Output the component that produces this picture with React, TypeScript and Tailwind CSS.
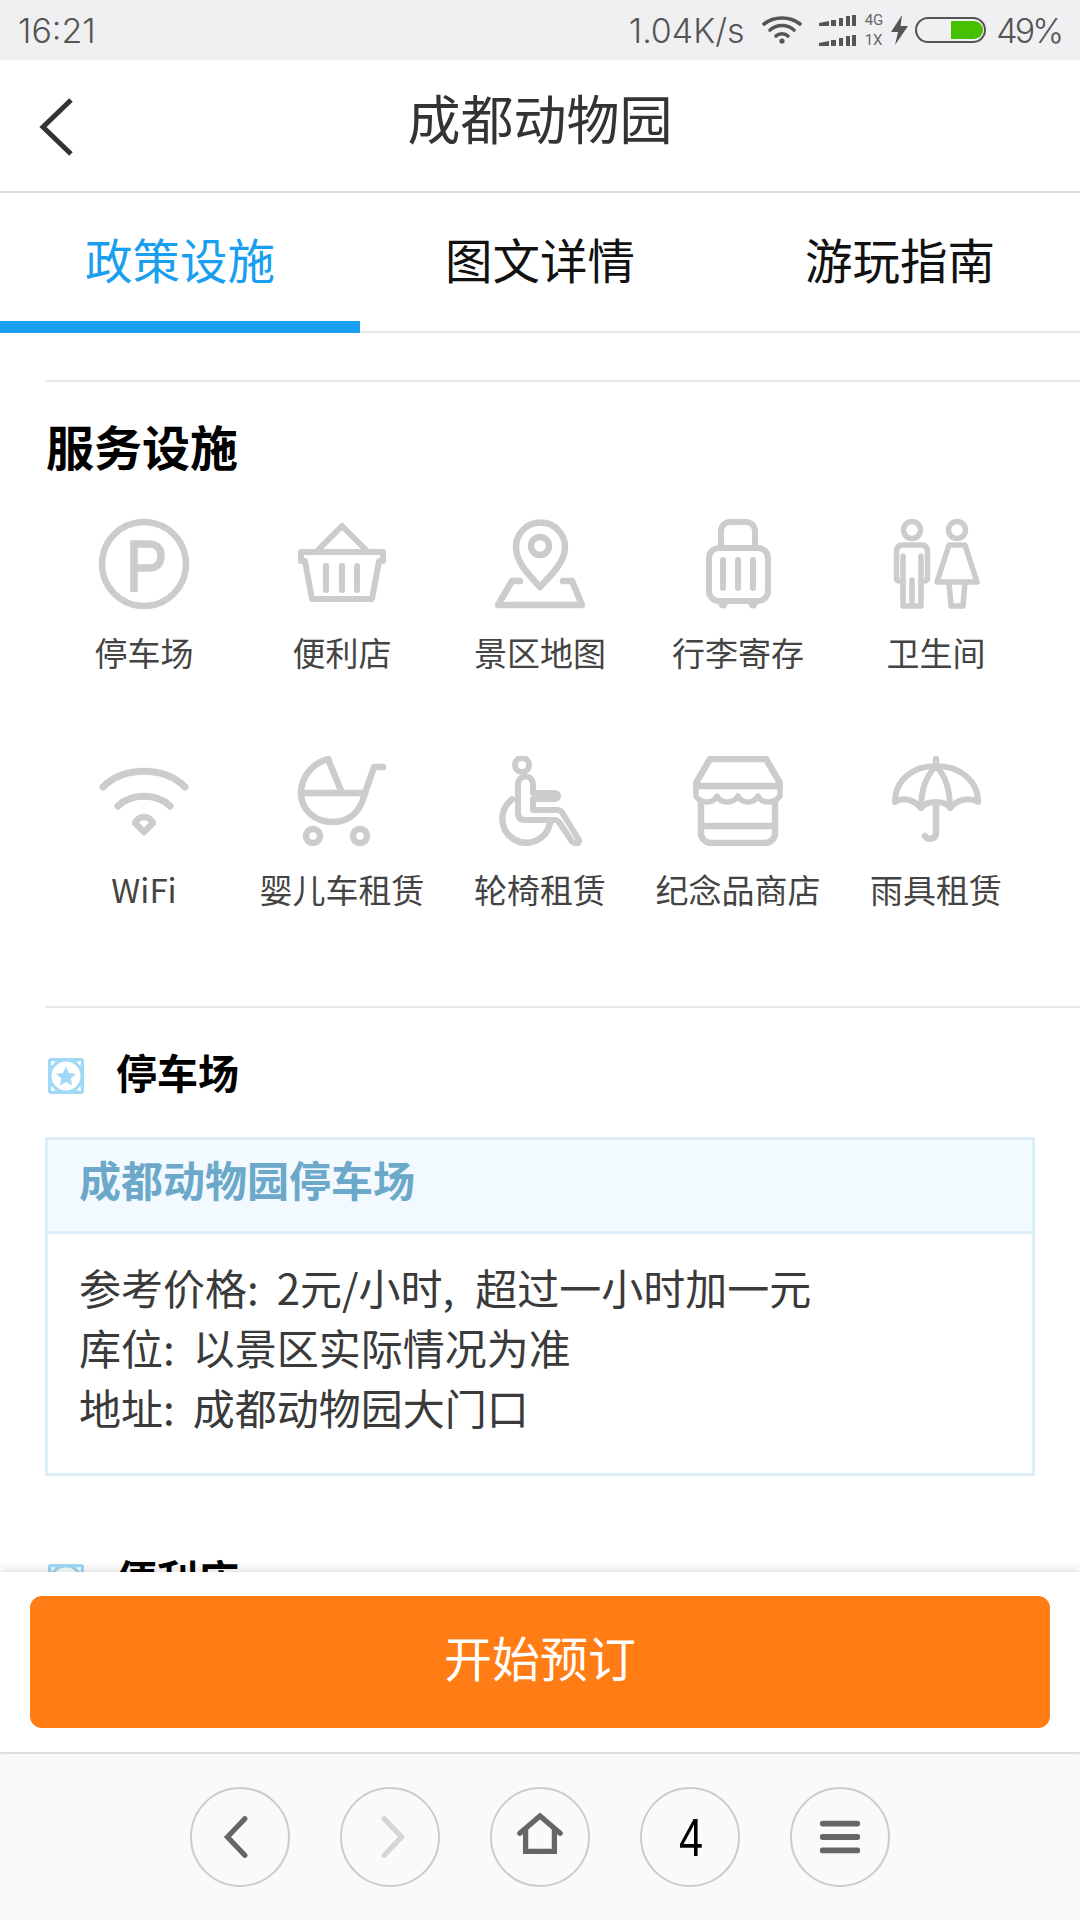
import type { ReactNode } from 'react';

const cjk = "font-['Noto_Sans_CJK_SC','Noto_Sans',sans-serif]";

function Glyph({ children }: { children: ReactNode }) {
  return (
    <svg
      width="90"
      height="90"
      viewBox="0 0 90 90"
      fill="none"
      stroke="#cccccc"
      strokeWidth="5.5"
      strokeLinecap="round"
      strokeLinejoin="round"
    >
      {children}
    </svg>
  );
}

const facilities: { label: string; icon: ReactNode }[] = [
  {
    label: '停车场',
    icon: (
      <>
        <circle cx="45" cy="45" r="42" strokeWidth="6.5" />
        <path d="M35 73V25H50C58 25 62 30 62 37C62 44 58 49 50 49H35" strokeWidth="7.5" strokeLinecap="butt" strokeLinejoin="miter" />
      </>
    ),
  },
  {
    label: '便利店',
    icon: (
      <>
        <path d="M21 31L45 7L69 31" strokeWidth="6" />
        <path d="M4 33H86V42H82L75 80H15L8 42H4Z" strokeWidth="6" />
        <path d="M29 47V71M45 47V71M60 47V71" strokeWidth="6" />
      </>
    ),
  },
  {
    label: '景区地图',
    icon: (
      <>
        <path d="M45 68C33 55 21 43 21 28A24.5 24.5 0 0 1 70 28C70 43 57 55 45 68Z" strokeWidth="6.5" />
        <circle cx="45" cy="27" r="9" strokeWidth="6.5" />
        <path d="M25 62H17L3 86H87L77 62H68" strokeWidth="6.5" />
      </>
    ),
  },
  {
    label: '行李寄存',
    icon: (
      <>
        <rect x="16" y="29" width="59" height="53" rx="10" strokeWidth="6" />
        <path d="M28 29V12a9 9 0 0 1 9-9h16a9 9 0 0 1 9 9v17" strokeWidth="6" />
        <path d="M30 41V69M45 41V69M60 41V69" strokeWidth="6" />
        <circle cx="30" cy="85" r="4.5" fill="#cccccc" stroke="none" />
        <circle cx="60" cy="85" r="4.5" fill="#cccccc" stroke="none" />
      </>
    ),
  },
  {
    label: '卫生间',
    icon: (
      <>
        <circle cx="21" cy="11" r="8.5" strokeWidth="5.5" />
        <circle cx="66" cy="11" r="8.5" strokeWidth="5.5" />
        <path d="M12 37V87H30V37M21 61V87" strokeWidth="5.5" />
        <path d="M12 62H9Q5.5 62 5.5 59V33Q5.5 26 12 26H30Q36.5 26 36.5 33V59Q36.5 62 33 62H30" strokeWidth="5.5" />
        <path d="M58 26H74L86 63H46Z" strokeWidth="5.5" />
        <path d="M58 63L60 87H72L74 63" strokeWidth="5.5" />
      </>
    ),
  },
  {
    label: 'WiFi',
    icon: (
      <>
        <path d="M4 31C25 10 65 10 86 31" strokeWidth="7" />
        <path d="M19 50C32 37 58 37 71 50" strokeWidth="7" />
        <path d="M45 61Q51 61 54 67L45 76L36 67Q39 61 45 61Z" strokeWidth="6.5" />
      </>
    ),
  },
  {
    label: '婴儿车租赁',
    icon: (
      <>
        <path d="M31 3C14 8 4 22 4 37C4 54 18 66 36 66C52 66 63 56 67 40L77 11H86" strokeWidth="6.5" />
        <path d="M31 3L45 37M4 37H68" strokeWidth="6.5" />
        <circle cx="16" cy="80" r="7" strokeWidth="6.5" />
        <circle cx="63" cy="80" r="7" strokeWidth="6.5" />
      </>
    ),
  },
  {
    label: '轮椅租赁',
    icon: (
      <>
        <circle cx="27" cy="9" r="7" strokeWidth="6" />
        <path d="M23 28a7.5 7.5 0 0 1 15 0V37H60a3 3 0 0 1 0 6H38V54H62Q66 54 68 58L84 84Q85 88 80 87Q78 87 76 84L64 66Q62 64 60 64H30Q23 64 23 56Z" strokeWidth="6" />
        <path d="M17 43.5A24 24 0 1 0 55 67" strokeWidth="6.5" />
      </>
    ),
  },
  {
    label: '纪念品商店',
    icon: (
      <>
        <path d="M17 3H73L87 27V30H3V27Z" strokeWidth="6.5" />
        <path d="M3 30V40C8 48 20 48 24 40C28 48 40 48 45 40C49 48 61 48 65 40C69 48 81 48 87 40V30" strokeWidth="5.5" />
        <path d="M8 46V77a10 10 0 0 0 10 10H72a10 10 0 0 0 10-10V46M8 70H82" strokeWidth="6.5" />
      </>
    ),
  },
  {
    label: '雨具租赁',
    icon: (
      <>
        <path d="M4 46C4 24 22 10 45 10C68 10 87 24 87 46C78 41 67 43 59 52C54 44 36 44 30 52C22 43 12 41 4 46Z" strokeWidth="6" />
        <path d="M45 10C35 20 30 35 30 52M45 10C55 20 59 35 59 52" strokeWidth="6" />
        <path d="M45 3V10M45 48V77a6 6 0 0 1-11 3" strokeWidth="6.5" />
      </>
    ),
  },
];

function StatusBar() {
  return (
    <div className="flex h-[60px] shrink-0 items-center bg-[#f0f0f2] pl-[18px] pr-[19px] font-['Inter',sans-serif] text-[34px] font-light text-[#555555]">
      <span>16:21</span>
      <span className="ml-auto">1.04K/s</span>
      <svg className="ml-[17px]" width="40" height="28" viewBox="0 0 40 28" fill="none" stroke="#555555" strokeWidth="3.6" strokeLinecap="round">
        <path d="M2 8C12 0 28 0 38 8" />
        <path d="M8 14C15 8 25 8 32 14" />
        <path d="M14 20C17 17 23 17 26 20" />
        <circle cx="20" cy="25" r="2.6" fill="#555555" stroke="none" />
      </svg>
      <div className="ml-[17px] flex flex-col gap-[9px]">
        <Signal />
        <Signal />
      </div>
      <div className="ml-[9px] flex flex-col font-['Roboto',sans-serif] text-[15px] font-normal leading-[20px] text-[#666666]">
        <span>4G</span>
        <span>1X</span>
      </div>
      <svg className="ml-[8px]" width="17" height="30" viewBox="0 0 17 30" fill="#555555">
        <path d="M11 0L0 17H7L4 30L17 11H9.5Z" />
      </svg>
      <div className="ml-[7px] flex h-[26px] w-[71px] items-center justify-end rounded-full border-2 border-[#555555] pr-[1px]">
        <div className="h-[18px] w-[32px] rounded-r-full bg-[#46c000]" />
      </div>
      <span className="ml-[10px] tracking-[-3px]">49%</span>
    </div>
  );
}

function Signal() {
  return (
    <svg width="37" height="11" viewBox="0 0 37 11" fill="#555555">
      <path d="M0 8L10 6V11H0ZM12 5H17V11H12ZM20 3H24V11H20ZM27 1H31V11H27ZM33 0H37V11H33Z" />
    </svg>
  );
}

function SectionIcon() {
  return (
    <svg width="36" height="36" viewBox="0 0 36 36" className="shrink-0">
      <rect width="36" height="36" rx="3" fill="#a0d9f6" />
      <circle cx="18" cy="18" r="14.5" fill="#ffffff" />
      <path d="M3 3L8 3.5L3.5 8ZM33 3L28 3.5L32.5 8ZM3 33L3.5 28L8 32.5ZM33 33L28 32.5L32.5 28Z" fill="#ffffff" />
      <path d="M18 8.5L21 15L28 15.8L22.8 20.5L24.2 27.5L18 24L11.8 27.5L13.2 20.5L8 15.8L15 15Z" fill="#a0d9f6" />
    </svg>
  );
}

function SectionTitle({ title, className }: { title: string; className: string }) {
  return (
    <div className={`ml-[48px] flex h-[60px] items-center gap-[32px] ${className}`}>
      <SectionIcon />
      <h3 className="pb-[10px] text-[41px] font-bold leading-[60px] text-black">{title}</h3>
    </div>
  );
}

function InfoLine({ label, children }: { label: string; children: ReactNode }) {
  return (
    <p>
      <span className="mr-[-3px]">{label}:&ensp;</span>
      {children}
    </p>
  );
}

function RoundButton({ children }: { children: ReactNode }) {
  return (
    <div className="flex h-[100px] w-[100px] items-center justify-center rounded-full border-2 border-[#cccccc]">
      {children}
    </div>
  );
}

function NavIcon({ children }: { children: ReactNode }) {
  return (
    <svg width="100" height="100" viewBox="0 0 100 100" fill="none" stroke="#666666" strokeWidth="5.5" strokeLinecap="round" strokeLinejoin="miter">
      {children}
    </svg>
  );
}

export default function App() {
  return (
    <div className={`flex h-[1920px] w-[1080px] flex-col overflow-hidden bg-white ${cjk}`}>
      <StatusBar />

      {/* 标题栏 */}
      <header className="relative flex h-[133px] shrink-0 items-center justify-center border-b-2 border-[#dddddd] pb-[15px]">
        <svg className="absolute left-[38px] top-[38px]" width="36" height="58" viewBox="0 0 36 58" fill="none" stroke="#333333" strokeWidth="5">
          <path d="M33 2L5 29L33 56" strokeLinejoin="miter" />
        </svg>
        <h1 className="text-[53px] font-normal text-[#333333]">成都动物园</h1>
      </header>

      {/* Tab */}
      <nav className="grid h-[140px] shrink-0 grid-cols-3 border-b-2 border-[#e5e5e5] text-[47.5px] text-[#111111]">
        <div className="-mb-[2px] flex h-[140px] items-center justify-center border-b-[12px] border-[#1a9ff0] pt-[3px] text-[#1a9ff0]">政策设施</div>
        <div className="flex items-center justify-center pb-[7px]">图文详情</div>
        <div className="flex items-center justify-center pb-[7px]">游玩指南</div>
      </nav>

      <main className="min-h-0 flex-1 overflow-hidden">
        <div className="ml-[45px] mt-[47px] border-t-2 border-[#e8e8e8]" />
        <h2 className="ml-[46px] mt-[33px] text-[48px] font-bold leading-[60px] text-black">服务设施</h2>

        <div className="ml-[45px] mt-[44px] grid w-[990px] grid-cols-5">
          {facilities.map((item) => (
            <div key={item.label} className="flex h-[237px] flex-col items-center">
              <Glyph>{item.icon}</Glyph>
              <span className="mt-[21px] whitespace-nowrap text-[33px] leading-[44px] text-[#444444]">{item.label}</span>
            </div>
          ))}
        </div>

        <div className="ml-[45px] mt-[13px] border-t-2 border-[#e8e8e8]" />

        <SectionTitle title="停车场" className="mt-[38px]" />

        <section className="ml-[45px] mt-[31px] w-[990px] border-[3px] border-[#dceef8]">
          <div className="flex h-[94px] items-center border-b-[3px] border-[#dceef8] bg-[#f2faff] pb-[15px] pl-[31px] text-[42px] font-bold text-[#6ba8c9]">
            成都动物园停车场
          </div>
          <div className="pb-[36px] pl-[31px] pt-[23px] text-[42px] leading-[60px] text-[#3a3a3a]">
            <InfoLine label="参考价格">2元/小时,&ensp;超过一小时加一元</InfoLine>
            <InfoLine label="库位">以景区实际情况为准</InfoLine>
            <InfoLine label="地址">成都动物园大门口</InfoLine>
          </div>
        </section>

        <SectionTitle title="便利店" className="mt-[76px]" />
      </main>

      {/* 底部 */}
      <div className="relative shrink-0 bg-white px-[30px] pb-[24px] pt-[24px] shadow-[0_-3px_8px_rgba(0,0,0,0.12)]">
        <button className="flex h-[132px] w-full items-center justify-center rounded-[12px] bg-[#ff7d14] pb-[12px] text-[48px] text-white">开始预订</button>
      </div>

      <footer className="flex h-[168px] shrink-0 items-center justify-center gap-[50px] border-t-2 border-[#e2e2e2] bg-[#fafafa]">
        <RoundButton>
          <NavIcon>
            <path d="M55 31L37 50L55 69" />
          </NavIcon>
        </RoundButton>
        <RoundButton>
          <NavIcon>
            <path d="M44 31L62 50L44 69" stroke="#d6d6d6" />
          </NavIcon>
        </RoundButton>
        <RoundButton>
          <NavIcon>
            <path d="M29 46L50 28L71 46" />
            <path d="M35 42V65H65V42" />
          </NavIcon>
        </RoundButton>
        <RoundButton>
          <span className="ml-[3px] scale-x-[0.8] font-['Liberation_Sans',sans-serif] text-[54px] text-black">4</span>
        </RoundButton>
        <RoundButton>
          <NavIcon>
            <path d="M32 36H68M32 50H68M32 64H68" strokeWidth="6" />
          </NavIcon>
        </RoundButton>
      </footer>
    </div>
  );
}
